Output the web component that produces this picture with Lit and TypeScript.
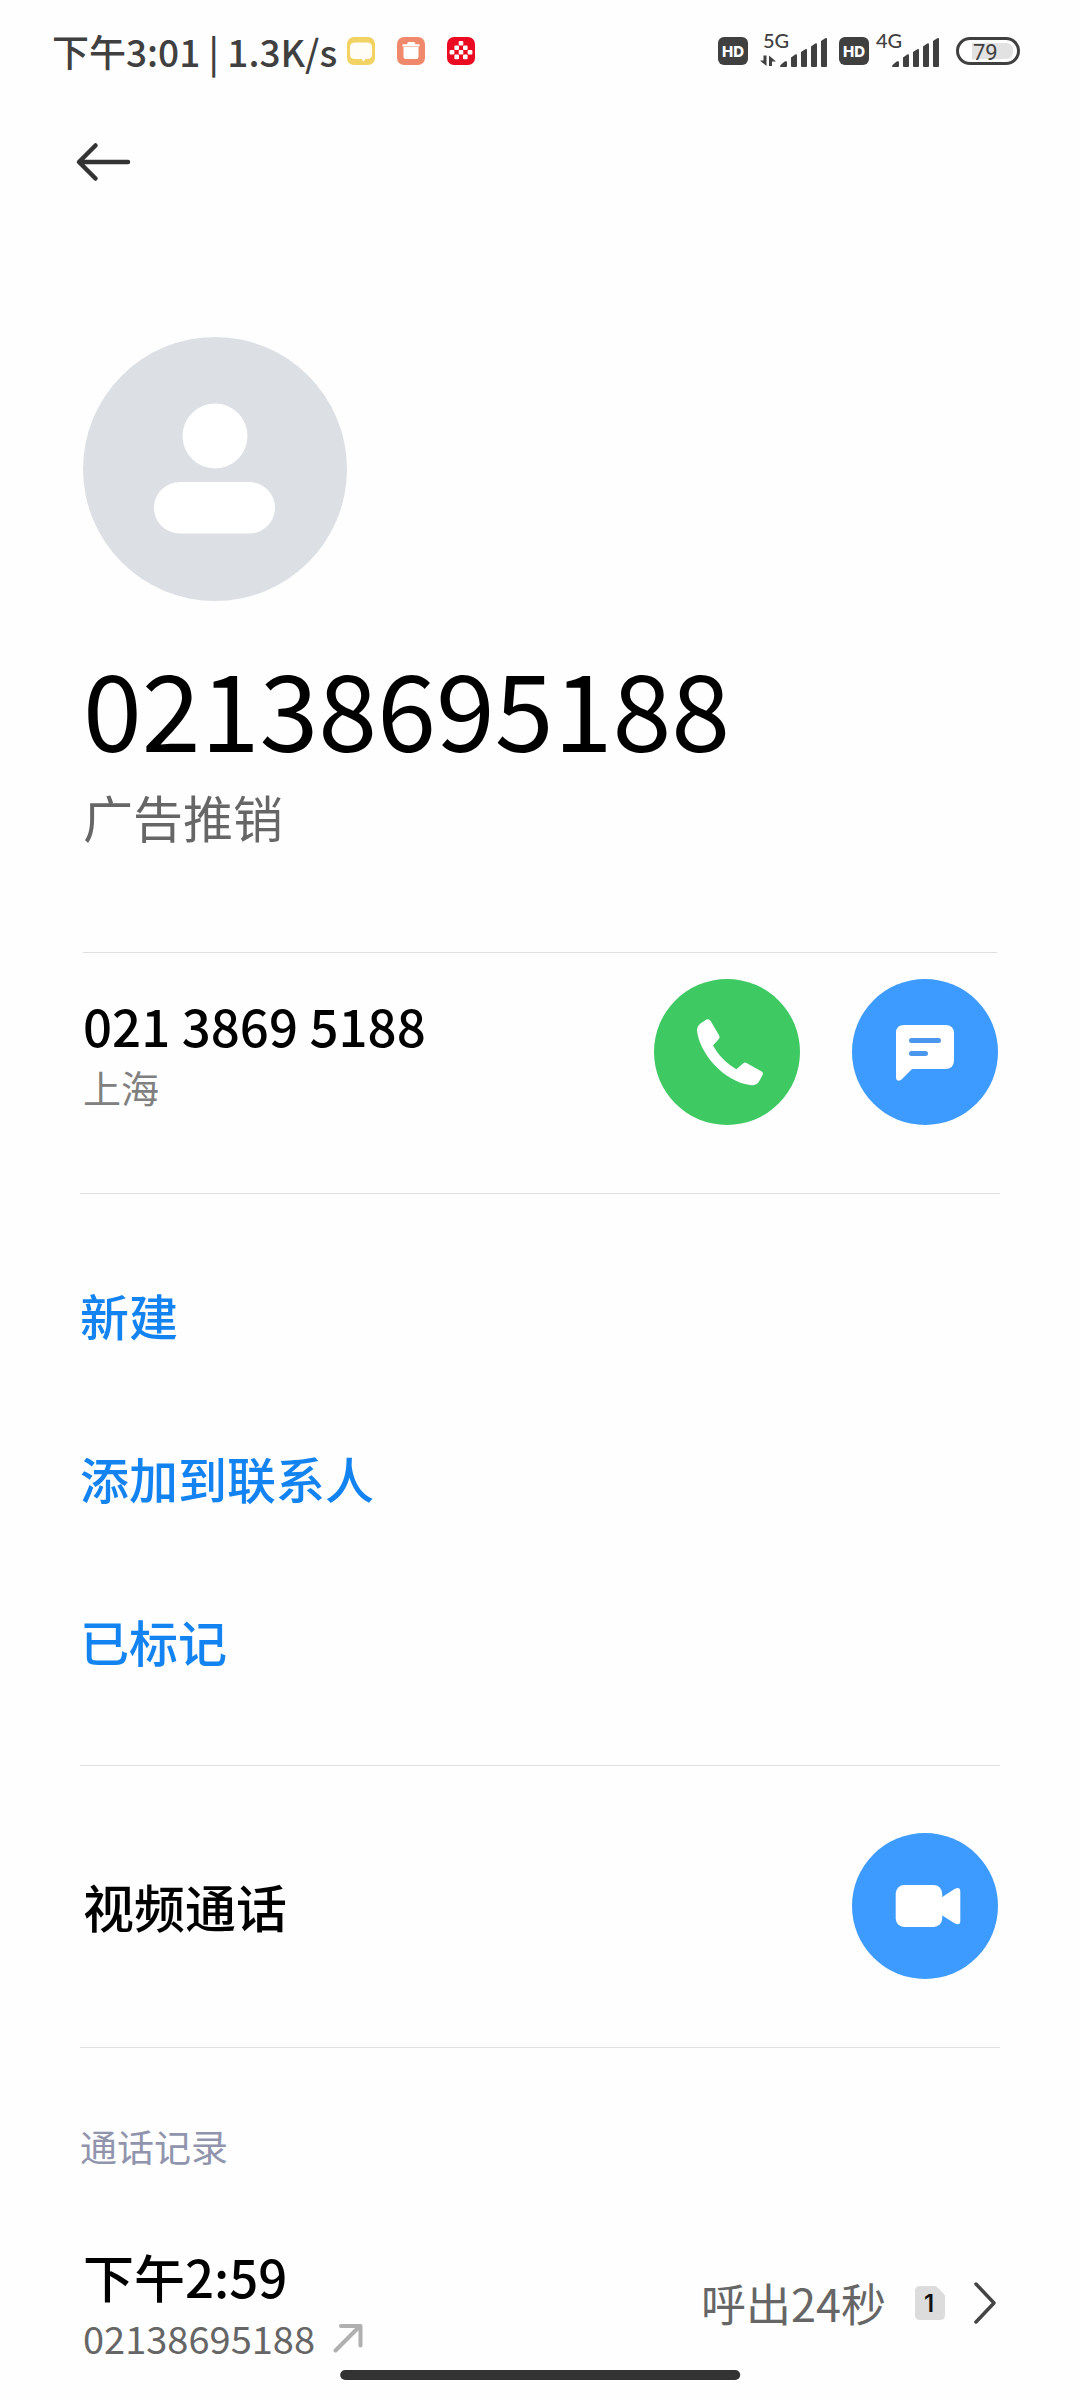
import { LitElement, html, css, svg } from "lit";
import { customElement, property } from "lit/decorators.js";

const signalBars = svg`
  <path d="M0 33.5Q0 32 1.4 31.2L4.6 28.600Q7 27.400 7 29.4V33Q7 34 6 34H1Q0 34 0 33Z"/>
  <path d="M11 24.4L15.2 21.6Q17 20.8 17 22.4V33Q17 34 16 34H12Q11 34 11 33Z"/>
  <path d="M21 19L25.2 16.2Q27 15.4 27 17V33Q27 34 26 34H22Q21 34 21 33Z"/>
  <path d="M31 13.4L35.2 10.6Q37 9.8 37 11.4V33Q37 34 36 34H32Q31 34 31 33Z"/>
  <path d="M41 8L45.2 5.2Q47 4.4 47 6V33Q47 34 46 34H42Q41 34 41 33Z"/>`;

@customElement("status-bar")
class StatusBar extends LitElement {
  static styles = css`
    :host {
      display: flex;
      align-items: center;
      justify-content: space-between;
      height: 102px;
      padding: 0 60px 0 52px;
      color: #404040;
    }
    .side {
      display: flex;
      align-items: center;
    }
    .clock {
      font-size: 37px;
      font-weight: 500;
      line-height: 44px;
      margin-right: 10px;
      white-space: nowrap;
    }
    .apps {
      display: flex;
      gap: 22px;
    }
    svg {
      display: block;
      flex: none;
      fill: currentColor;
      overflow: visible;
    }
    .net {
      margin: 0 12px;
    }
    .net4 {
      margin: 0 16px 0 7px;
    }
    .gen {
      font-family: Lato, sans-serif;
      font-size: 20px;
      font-weight: 500;
    }
    .hd {
      font-family: Inter, sans-serif;
      font-size: 15px;
      font-weight: 800;
      fill: #fff;
    }
    .level {
      font-family: Roboto, sans-serif;
      font-size: 22px;
      font-weight: 400;
    }
  `;

  private hd() {
    return html`<svg width="30" height="28" viewBox="0 0 30 28">
      <rect width="30" height="28" rx="6" />
      <text class="hd" x="15" y="19.500" text-anchor="middle">HD</text>
    </svg>`;
  }

  render() {
    return html`
      <div class="side">
        <span class="clock">下午3:01 | 1.3K/s</span>
        <div class="apps">
          <svg width="28" height="28" viewBox="0 0 28 28">
            <rect width="28" height="28" rx="7" fill="#f2d263" />
            <path fill="#fffdf6" d="M8 5.500H20Q25 5.500 25 10V17.500Q25 22 20 22H18.500L16.500 24.500L14.500 22H8Q3 22 3 17.500V10Q3 5.500 8 5.500Z" />
          </svg>
          <svg width="28" height="28" viewBox="0 0 28 28">
            <rect width="28" height="28" rx="7" fill="#f0896c" />
            <path fill="#fff" d="M11 5H17.500L18.500 7.300H22.500V9.500H5.500V7.300H10ZM6.500 10H21.500V19.500Q21.500 22 19 22H9Q6.500 22 6.500 19.500Z" />
          </svg>
          <svg width="28" height="28" viewBox="0 0 28 28">
            <rect width="28" height="28" rx="7" fill="#ea0a22" />
            <g fill="#fff">
              <rect x="11.700" y="3.900" width="4.600" height="4.600" rx="1" />
              <rect x="7.400" y="8.400" width="4.600" height="4.600" rx="1" />
              <rect x="16" y="8.400" width="4.600" height="4.600" rx="1" />
              <rect x="2.600" y="13" width="4.800" height="4.600" rx="1" />
              <rect x="11.700" y="13" width="4.600" height="4.600" rx="1" />
              <rect x="20.600" y="13" width="4.800" height="4.600" rx="1" />
              <rect x="7.400" y="17.600" width="4.600" height="4.600" rx="1" />
              <rect x="16" y="17.600" width="4.600" height="4.600" rx="1" />
            </g>
          </svg>
        </div>
      </div>
      <div class="side">
        ${this.hd()}
        <svg class="net" width="67" height="46" viewBox="0 -4 67 46">
          <text class="gen" x="3" y="15.500">5G</text>
          <path d="M3.500 23.500H6.500V34L0 28.500H3.500ZM9 34V23.500L16 29.500H12V34Z" />
          <g transform="translate(20 1)">${signalBars}</g>
        </svg>
        ${this.hd()}
        <svg class="net4" width="64" height="46" viewBox="0 -4 64 46">
          <text class="gen" x="0" y="15.500">4G</text>
          <g transform="translate(16 1)">${signalBars}</g>
        </svg>
        <svg width="64" height="36" viewBox="0 -4 64 36">
          <rect x="1.500" y="1.500" width="61" height="25" rx="12.500" fill="#fff" stroke="#404040" stroke-width="3" />
          <path fill="#e2e2e2" d="M16 6H50Q57 6 57 14Q57 22 50 22H16Z" />
          <text class="level" x="17" y="22.500">79</text>
        </svg>
      </div>
    `;
  }
}

@customElement("round-button")
class RoundButton extends LitElement {
  @property() kind = "call";
  @property() name = "";

  static styles = css`
    :host {
      display: block;
      flex: none;
    }
    button {
      display: block;
      width: 146px;
      height: 146px;
      padding: 0;
      border: 0;
      border-radius: 50%;
      background: #3d9bff;
      color: #fff;
      cursor: pointer;
    }
    .call {
      background: #3ec963;
    }
    svg {
      display: block;
      fill: #fff;
    }
    .lines {
      fill: none;
      stroke: #4b97ee;
      stroke-width: 5;
      stroke-linecap: round;
    }
  `;

  private icon() {
    switch (this.kind) {
      case "message":
        return svg`<path d="M52 46H93.500Q102 46 102 54.500V81Q102 90 93 90H61Q60 90 59 91L49.500 100.500Q47.800 102 46 101.500Q44 101 44 98.500V54Q44 46 52 46Z"/>
          <path class="lines" d="M59.500 61.600H86.500M59.500 74.600H73.500"/>`;
      case "video":
        return svg`<rect x="43.700" y="52" width="46.500" height="42" rx="8.500"/>
          <path d="M88 65.500L102.500 56Q108.300 53 108.300 58.500V88Q108.300 93 102.500 90.300L88 81Z"/>`;
      default:
        return svg`<path d="M46.500 44.500L52.500 40.600Q55 39.300 56.500 41.800L65.300 56.800Q66.200 58.500 64.800 60L59 66.600C64 75.500 72 84.500 82.300 90.200L89.300 84.200Q90.800 83 92.500 84L107.300 92.300Q109.700 93.800 108.500 96.300L105 102.500Q102.500 106.600 97.500 106.300C69 103 45 73 43 51.500Q43 47 46.500 44.500Z"/>`;
    }
  }

  render() {
    return html`<button class=${this.kind} aria-label=${this.name}>
      <svg width="146" height="146" viewBox="0 0 146 146">${this.icon()}</svg>
    </button>`;
  }
}

@customElement("app-root")
class AppRoot extends LitElement {
  static styles = css`
    :host {
      display: block;
      min-height: 100vh;
      background: #fefefe;
      color: #000;
      font-family: "Noto Sans CJK SC", sans-serif;
    }
    svg {
      display: block;
      flex: none;
      fill: none;
      stroke-linecap: round;
      stroke-linejoin: round;
    }
    .nav {
      display: flex;
      align-items: center;
      height: 120px;
      padding: 0 72px;
    }
    .back {
      padding: 0;
      border: 0;
      background: none;
      cursor: pointer;
    }
    .page {
      padding: 0 80px;
    }
    .profile {
      padding: 115px 3px 106px;
    }
    h1,
    h2,
    p {
      margin: 0;
      font-weight: 400;
    }
    h1 {
      margin-top: 45px;
      font-size: 106px;
      line-height: 120px;
    }
    .tag {
      margin-top: 20px;
      font-size: 50px;
      line-height: 60px;
      color: #666;
    }
    .rule {
      height: 1px;
      background: #e0e0e0;
    }
    .inset {
      margin: 0 3px;
    }
    .row {
      display: flex;
      align-items: center;
      padding: 67px 2px 68px 3px;
    }
    .number {
      padding-top: 26px;
    }
    .info {
      display: flex;
      flex: 1;
      flex-direction: column;
      gap: 10px;
    }
    .buttons {
      display: flex;
      gap: 52px;
    }
    .title {
      font-size: 51px;
      font-weight: 500;
      line-height: 60px;
    }
    .sub {
      display: flex;
      align-items: center;
      gap: 14px;
      font-size: 38px;
      line-height: 44px;
      color: #666;
    }
    .place {
      color: #808080;
    }
    .actions {
      display: flex;
      flex-direction: column;
      align-items: flex-start;
      padding: 39px 0 43px;
    }
    .action {
      height: 163px;
      padding: 0;
      border: 0;
      background: none;
      color: #1283f0;
      font: 500 49px/60px "Noto Sans CJK SC", sans-serif;
      cursor: pointer;
    }
    h2 {
      margin: 76px 0 78px;
      font-size: 37px;
      line-height: 44px;
      color: #9095ad;
    }
    .record {
      display: flex;
      align-items: center;
      padding: 0 3px;
      color: inherit;
      text-decoration: none;
    }
    .duration {
      margin-right: 29px;
      font-size: 45px;
      line-height: 60px;
      color: #666;
    }
    .sim {
      margin-right: 28px;
    }
    .simno {
      font-family: Inter, sans-serif;
      font-size: 24px;
      font-weight: 600;
      fill: #111;
    }
    .home {
      position: fixed;
      bottom: 20px;
      left: 50%;
      width: 37%;
      height: 10px;
      border-radius: 5px;
      background: #333;
      transform: translateX(-50%);
    }
  `;

  private actions = ["新建", "添加到联系人", "已标记"];

  render() {
    return html`
      <status-bar></status-bar>
      <nav class="nav">
        <button class="back" aria-label="返回">
          <svg width="64" height="48" viewBox="0 0 64 48" stroke="#333" stroke-width="4.500">
            <path d="M7.500 24H56M23.500 7.500L7 24L23.500 40.500" />
          </svg>
        </button>
      </nav>
      <main class="page">
        <header class="profile">
          <svg width="264" height="264" viewBox="0 0 264 264">
            <circle cx="132" cy="132" r="132" fill="#dcdfe4" />
            <circle cx="132" cy="99" r="32.500" fill="#fff" />
            <rect x="71" y="145" width="121" height="51.500" rx="25.700" fill="#fff" />
          </svg>
          <h1>02138695188</h1>
          <p class="tag">广告推销</p>
        </header>
        <div class="rule inset"></div>
        <section class="row number">
          <div class="info">
            <span class="title">021 3869 5188</span>
            <span class="sub place">上海</span>
          </div>
          <div class="buttons">
            <round-button kind="call" name="拨打电话"></round-button>
            <round-button kind="message" name="发送短信"></round-button>
          </div>
        </section>
        <div class="rule"></div>
        <section class="actions">
          ${this.actions.map((label) => html`<button class="action">${label}</button>`)}
        </section>
        <div class="rule"></div>
        <section class="row">
          <div class="info"><span class="title">视频通话</span></div>
          <round-button kind="video" name="视频通话"></round-button>
        </section>
        <div class="rule"></div>
        <h2>通话记录</h2>
        <a class="record" href="#record">
          <div class="info">
            <span class="title">下午2:59</span>
            <span class="sub">
              02138695188
              <svg width="34" height="30" viewBox="-4 0 34 30" stroke="#b0b0b0" stroke-width="4">
                <path d="M2.500 27.500L27 3M8 3H27.500V22.500" />
              </svg>
            </span>
          </div>
          <span class="duration">呼出24秒</span>
          <svg class="sim" width="30" height="34" viewBox="0 0 30 34">
            <path fill="#dcdcdc" d="M5 0H19.500Q21 0 22 1L29 8Q30 9 30 10.500V29Q30 34 25 34H5Q0 34 0 29V5Q0 0 5 0Z" />
            <text class="simno" x="14" y="26" text-anchor="middle">1</text>
          </svg>
          <svg width="24" height="44" viewBox="0 0 24 44" stroke="#444" stroke-width="3.500">
            <path d="M3 3L21 22L3 41" />
          </svg>
        </a>
      </main>
      <div class="home"></div>
    `;
  }
}
